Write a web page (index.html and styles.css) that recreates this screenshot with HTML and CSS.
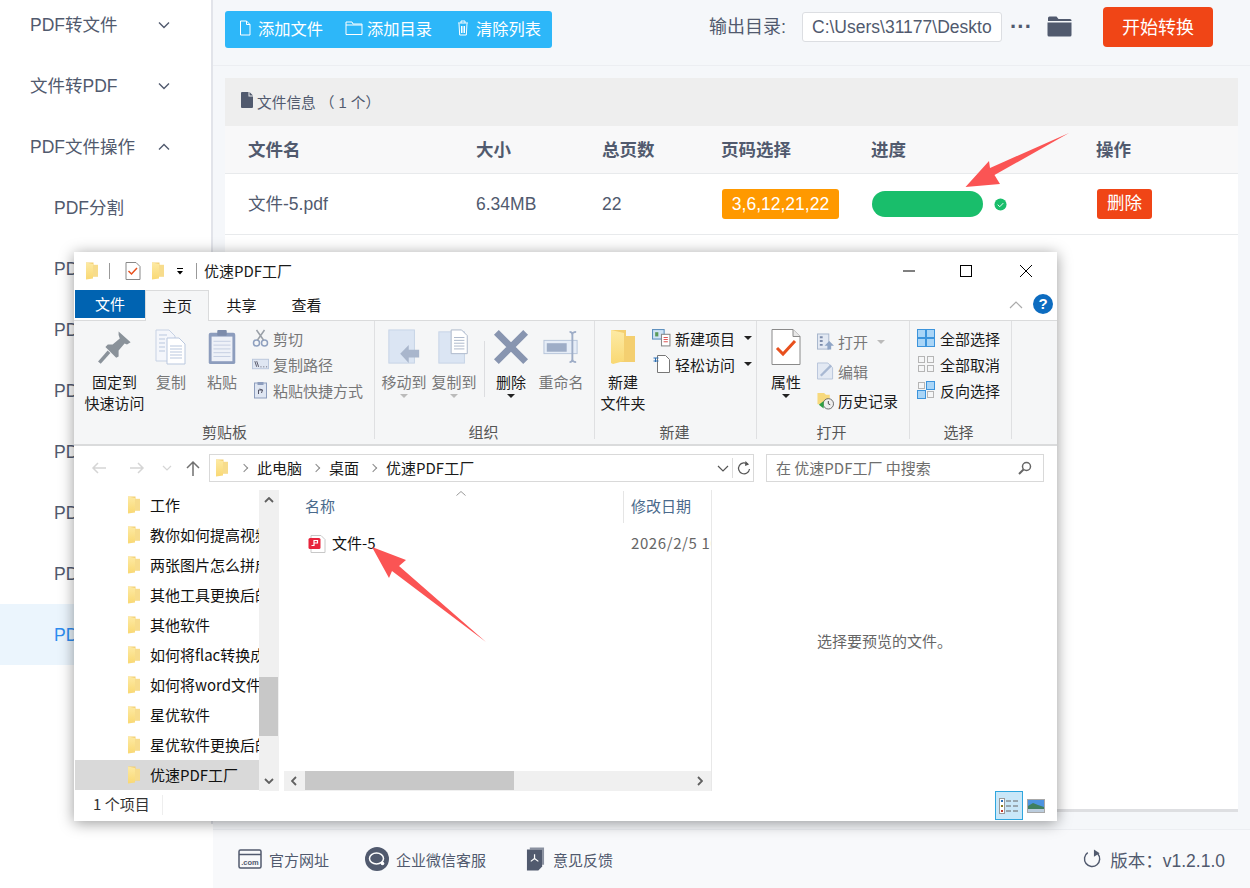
FILE: index.html
```html
<!DOCTYPE html>
<html lang="zh-CN">
<head>
<meta charset="utf-8">
<title>优速PDF工厂</title>
<link rel="stylesheet" href="styles.css">
</head>
<body>
<svg class="defs" width="0" height="0" aria-hidden="true">
  <defs>
    <linearGradient id="fy" x1="0" y1="0" x2="0" y2="1"><stop offset="0" stop-color="#fdeaa4"/><stop offset="1" stop-color="#f9d873"/></linearGradient>
    <symbol id="folder" viewBox="0 0 14 18">
      <path d="M1 0.500h7.500v2.500h4.500v11.500H5V16H1z" fill="#f3cf72"/>
      <path d="M1 0.500l7 1.500v14.500L1 17.500z" fill="url(#fy)"/>
      <path d="M8 2.800h5v11.700H8z" fill="#f7dc8c"/>
    </symbol>
    <symbol id="chev" viewBox="0 0 12 8"><path d="M1 1.500l5 5 5-5" fill="none" stroke="#515a6e" stroke-width="1.400"/></symbol>
  </defs>
</svg>

<div class="app">
  <aside class="sidebar">
    <nav class="nav">
      <div class="nav-item"><span>PDF转文件</span><svg class="nav-chev"><use href="#chev"/></svg></div>
      <div class="nav-item"><span>文件转PDF</span><svg class="nav-chev"><use href="#chev"/></svg></div>
      <div class="nav-item"><span>PDF文件操作</span><svg class="nav-chev up"><use href="#chev"/></svg></div>
      <div class="nav-sub">PDF分割</div>
      <div class="nav-sub">PDF合并</div>
      <div class="nav-sub">PDF压缩</div>
      <div class="nav-sub">PDF加密</div>
      <div class="nav-sub">PDF解密</div>
      <div class="nav-sub">PDF旋转</div>
      <div class="nav-sub">PDF水印</div>
      <div class="nav-sub active">PDF提取</div>
    </nav>
  </aside>

  <main class="main">
    <header class="topbar">
      <div class="toolgroup">
        <button class="tool"><svg class="ti" viewBox="0 0 12 16"><path d="M1.500 1h6l3.500 3.500V15h-9.500z M7.500 1v3.500H11" fill="none" stroke="#fff" stroke-width="1"/></svg>添加文件</button>
        <button class="tool"><svg class="ti wide" viewBox="0 0 18 16"><path d="M1 2h6l1 2h9v10.500H1z M1 5h16" fill="none" stroke="#fff" stroke-width="1"/></svg>添加目录</button>
        <button class="tool"><svg class="ti" viewBox="0 0 12 16"><path d="M1 3h10M4 3V1h4v2M2 3.500l.7 11.500h6.600l.7-11.500M4.500 6v7M6 6v7M7.500 6v7" fill="none" stroke="#fff" stroke-width="1"/></svg>清除列表</button>
      </div>
      <div class="output">
        <span class="out-label">输出目录:</span>
        <div class="out-input">C:\Users\31177\Deskto</div>
        <span class="dots">···</span>
        <svg class="out-folder" viewBox="0 0 25 22"><path d="M1 3a1.500 1.500 0 0 1 1.500-1.500h7l2 2.500H23a1.500 1.500 0 0 1 1.500 1.500V6H1z" fill="#515a6e"/><path d="M.5 7.500h24V20a1.500 1.500 0 0 1-1.500 1.500H2A1.500 1.500 0 0 1 .5 20z" fill="#515a6e"/></svg>
        <button class="start">开始转换</button>
      </div>
    </header>

    <section class="panel">
      <div class="info"><svg class="info-icon" viewBox="0 0 12 16"><path d="M0 1a1 1 0 0 1 1-1h6.500v4.500H12V15a1 1 0 0 1-1 1H1a1 1 0 0 1-1-1z M8.500 0L12 3.500H8.500z" fill="#515a6e"/></svg><span>文件信息 （ 1 个）</span></div>
      <div class="row head">
        <div>文件名</div><div>大小</div><div>总页数</div><div>页码选择</div><div>进度</div><div>操作</div>
      </div>
      <div class="row body">
        <div class="cell-name">文件-5.pdf</div><div>6.34MB</div><div>22</div>
        <div><span class="pages">3,6,12,21,22</span></div>
        <div class="prog"><span class="bar"></span><svg class="ok" viewBox="0 0 14 14"><circle cx="7" cy="7" r="6.500" fill="#19be6b"/><path d="M4 7.200l2.200 2.200L10 5.500" fill="none" stroke="#fff" stroke-width="1"/></svg></div>
        <div><span class="del">删除</span></div>
      </div>
    </section>

    <footer class="foot">
      <div class="foot-links">
        <span class="flink l1"><svg class="fi" viewBox="0 0 24 20"><rect x="1" y="1" width="22" height="18" rx="1.500" fill="none" stroke="#515a6e" stroke-width="1.500"/><path d="M1 5.500h22" stroke="#515a6e" stroke-width="1.500"/><text x="12" y="15.500" class="com">.com</text></svg>官方网址</span>
        <span class="flink l2"><svg class="fi" viewBox="0 0 24 24"><circle cx="12" cy="12" r="12" fill="#515a6e"/><ellipse cx="11.500" cy="11.500" rx="7" ry="5.500" fill="none" stroke="#fff" stroke-width="1.500"/><circle cx="17.500" cy="16.500" r="1.800" fill="#fff"/></svg>企业微信客服</span>
        <span class="flink l3"><svg class="fi doc" viewBox="0 0 20 24"><path d="M4 0h15v18l-2 0V2H4z" fill="#8a91a0"/><path d="M1 2h16v18l-4 4H1z" fill="#515a6e"/><path d="M9 7v4.500M9 11.500l-4 3M9 11.500l4 3" stroke="#fff" stroke-width="1.300" fill="none"/></svg>意见反馈</span>
      </div>
      <div class="version"><svg class="ref" viewBox="0 0 20 20"><path d="M15.500 4.500A8 8 0 1 1 5 3.300" fill="none" stroke="#515a6e" stroke-width="1.500"/><path d="M11.500 0l6 4-6 3.500z" fill="#515a6e"/></svg><span>版本：v1.2.1.0</span></div>
    </footer>
  </main>

  <div class="win">
    <div class="titlebar">
      <svg class="f14"><use href="#folder"/></svg>
      <i class="tsep"></i>
      <svg class="tcheck" viewBox="0 0 16 18"><path d="M1 .5h10l4 4v13H1z" fill="#fff" stroke="#888"/><path d="M3.500 9l3 3 5.500-6" fill="none" stroke="#e8501d" stroke-width="1.500"/></svg>
      <svg class="f14"><use href="#folder"/></svg>
      <svg class="tcaret" viewBox="0 0 8 7"><path d="M1 .5h6" stroke="#000"/><path d="M1 3h6L4 6.500z" fill="#000"/></svg>
      <i class="tsep s2"></i>
      <span class="wtitle">优速PDF工厂</span>
      <div class="winbtns">
        <svg viewBox="0 0 14 14"><path d="M1 7h12" stroke="#000"/></svg>
        <svg viewBox="0 0 14 14"><rect x="1.500" y="1.500" width="11" height="11" fill="none" stroke="#000"/></svg>
        <svg viewBox="0 0 14 14"><path d="M1 1l12 12M13 1L1 13" stroke="#000" fill="none"/></svg>
      </div>
    </div>

    <div class="tabs">
      <span class="tab file">文件</span>
      <span class="tab cur">主页</span>
      <span class="tab t3">共享</span>
      <span class="tab t4">查看</span>
      <svg class="collapse" viewBox="0 0 14 8"><path d="M1 7l6-6 6 6" fill="none" stroke="#aaa" stroke-width="1.200"/></svg>
      <span class="help">?</span>
    </div>

    <div class="ribbon">
      <div class="group g1">
        <div class="gbody">
          <div class="big w61"><svg class="bi" viewBox="0 0 30 30"><path d="M18 2l10 9-3 2-2-1-5 6 0 5-2 1-9-9 2-2 4 0 6-5-1-3z" fill="#8a929a"/><path d="M10 19L2 28" stroke="#8a929a" stroke-width="3"/></svg><span class="lb dark">固定到<br>快速访问</span></div>
          <div class="big w52"><svg class="bi" viewBox="0 0 32 36"><path d="M1 1h13l6 6v25H1z" fill="#f4f6fb" stroke="#c7d2e4"/><path d="M12 9h12l6 6v20H12z" fill="#fff" stroke="#b9c7de"/><path d="M4 6h8M4 10h6M4 14h6M4 18h6M4 22h6M15 17h12M15 20h12M15 23h12M15 26h12M15 29h12" stroke="#b9c7de"/></svg><span class="lb">复制</span></div>
          <div class="big w50"><svg class="bi" viewBox="0 0 30 38"><rect x="1" y="4" width="28" height="33" rx="2" fill="#8d9dbd"/><rect x="4" y="8" width="22" height="26" fill="#eef1f8"/><rect x="10" y="1" width="10" height="6" rx="1" fill="#7d8cab"/><path d="M6 13h18M6 17h18M6 21h18M6 25h18M6 29h18" stroke="#c4cde0"/></svg><span class="lb">粘贴</span></div>
          <div class="smalls s1">
            <div class="sm dis"><svg class="si" viewBox="0 0 16 18"><circle cx="4" cy="14" r="3" fill="none" stroke="#8fa0bf" stroke-width="1.500"/><circle cx="12" cy="14" r="3" fill="none" stroke="#8fa0bf" stroke-width="1.500"/><path d="M5 11L12 1M11 11L4 1" stroke="#9aa0a8" stroke-width="1.500"/></svg>剪切</div>
            <div class="sm dis"><svg class="si" viewBox="0 0 18 12"><rect x=".5" y="1" width="17" height="10" fill="#dfe6f2" stroke="#b9c6dc"/><path d="M3 3l2 6M5 3l2 6M9 9h1M12 9h1M15 9h1" stroke="#556"/></svg>复制路径</div>
            <div class="sm dis"><svg class="si" viewBox="0 0 14 18"><rect x="1" y="2" width="12" height="15" fill="#dfe6f2" stroke="#8d9dbd"/><rect x="4" y="1" width="6" height="3" fill="#8d9dbd"/><path d="M5 13V9h4M6 8l3 1-1 3" stroke="#556" fill="none"/></svg>粘贴快捷方式</div>
          </div>
        </div>
        <div class="glabel">剪贴板</div>
      </div>

      <div class="group g2">
        <div class="gbody">
          <div class="big w50"><svg class="bi" viewBox="0 0 34 38"><rect x="1" y="1" width="27" height="35" fill="#dbe5f3" stroke="#c6d3e6"/><path d="M13 26l9-9v5h11v8H22v6z" fill="#a9b6cc"/></svg><span class="lb">移动到</span><i class="caret gray"></i></div>
          <div class="big w50"><svg class="bi" viewBox="0 0 34 38"><rect x="1" y="3" width="27" height="33" fill="#dbe5f3" stroke="#c6d3e6"/><path d="M14 1h11l6 6v19H14z" fill="#fff" stroke="#aab6c9"/><path d="M17 9h11M17 12h11M17 15h11M17 18h11M17 21h11" stroke="#aab6c9"/></svg><span class="lb">复制到</span><i class="caret gray"></i></div>
          <i class="vsep"></i>
          <div class="big w50"><svg class="bi" viewBox="0 0 32 32"><path d="M3 3l26 26M29 3L3 29" stroke="#8895b0" stroke-width="6" fill="none"/></svg><span class="lb dark">删除</span><i class="caret"></i></div>
          <div class="big w50"><svg class="bi" viewBox="0 0 38 36"><rect x="1" y="11" width="35" height="14" fill="#e6edf7" stroke="#b6c4da"/><rect x="4" y="14" width="21" height="9" fill="#9eadc7"/><path d="M28 2c3 0 3 2 3 3v26c0 1 0 3-3 3M35 2c-3 0-4 2-4 3M35 34c-3 0-4-2-4-3" fill="none" stroke="#9eadc7" stroke-width="2"/></svg><span class="lb">重命名</span></div>
        </div>
        <div class="glabel">组织</div>
      </div>

      <div class="group g3">
        <div class="gbody">
          <div class="big w54"><svg class="bi" viewBox="0 0 26 36"><path d="M1 1h15v6h9v26H10v-1H1z" fill="#f4cf70"/><path d="M1 1l13 3v28L3 35 1 34z" fill="url(#fy)"/></svg><span class="lb dark">新建<br>文件夹</span></div>
          <div class="smalls s3">
            <div class="sm"><svg class="si wide" viewBox="0 0 18 17"><rect x=".5" y=".5" width="11" height="9" fill="#cfe3f5" stroke="#5c8fbe"/><rect x="9" y="5" width="8" height="11" fill="#fff" stroke="#888"/><path d="M11 8h4M11 10h4M11 12h4" stroke="#d55"/><rect x="3" y="3" width="3" height="4" fill="#5a9a5a"/></svg>新建项目<i class="caret in"></i></div>
            <div class="sm"><svg class="si wide" viewBox="0 0 18 18"><path d="M5 .5h8l4 4v13H5z" fill="#fff" stroke="#777"/><path d="M1 3h5M1 6h5" stroke="#2a6fb5"/><path d="M3 3v4" stroke="#2a6fb5"/></svg>轻松访问<i class="caret in"></i></div>
          </div>
        </div>
        <div class="glabel">新建</div>
      </div>

      <div class="group g4">
        <div class="gbody">
          <div class="big w50"><svg class="bi" viewBox="0 0 30 36"><path d="M1 .5h21l7 7v28H1z" fill="#fff" stroke="#8a8a8a"/><path d="M22 .5v7h7" fill="#e8e8e8" stroke="#8a8a8a"/><path d="M6 19l6 6 12-13" fill="none" stroke="#e8501d" stroke-width="3"/></svg><span class="lb dark">属性</span><i class="caret"></i></div>
          <div class="smalls s4">
            <div class="sm dis"><svg class="si" viewBox="0 0 18 18"><rect x=".5" y=".5" width="12" height="16" fill="#e3e9f3" stroke="#a6b4cc"/><path d="M3 4h3M3 8h3M3 12h3" stroke="#7d8cab" stroke-width="2"/><path d="M13 8l5 5h-3v4h-4v-4H8z" fill="#8fa5c6"/></svg>打开<i class="caret in gray"></i></div>
            <div class="sm dis"><svg class="si" viewBox="0 0 18 18"><path d="M.5.5h11l5 5v12H.5z" fill="#e3e9f3" stroke="#b6c4da"/><path d="M4 14L15 3" stroke="#a8b8d2" stroke-width="2.500"/></svg>编辑</div>
            <div class="sm"><svg class="si" viewBox="0 0 18 18"><path d="M.5.5h7l2 2h4v10H.5z" fill="#f7d97d"/><circle cx="12" cy="12" r="5.500" fill="#eee" stroke="#666"/><path d="M12 9v3l2 1" stroke="#444" fill="none"/><path d="M2 13l5-4v8z" fill="#2f9e44"/></svg>历史记录</div>
          </div>
        </div>
        <div class="glabel">打开</div>
      </div>

      <div class="group g5">
        <div class="gbody">
          <div class="smalls s5">
            <div class="sm"><svg class="si sel" viewBox="0 0 18 18"><g fill="#a9d5f7" stroke="#3c94dc"><rect x=".5" y=".5" width="8" height="8"/><rect x="9.500" y=".5" width="8" height="8"/><rect x=".5" y="9.500" width="8" height="8"/><rect x="9.500" y="9.500" width="8" height="8"/></g></svg>全部选择</div>
            <div class="sm"><svg class="si sel" viewBox="0 0 18 18"><g fill="none" stroke="#b5b5b5"><rect x="1.500" y="1.500" width="6" height="6"/><rect x="10.500" y="1.500" width="6" height="6"/><rect x="1.500" y="10.500" width="6" height="6"/><rect x="10.500" y="10.500" width="6" height="6"/></g></svg>全部取消</div>
            <div class="sm"><svg class="si sel" viewBox="0 0 18 18"><g fill="none" stroke="#b5b5b5"><rect x="1.500" y="1.500" width="6" height="6"/><rect x="10.500" y="10.500" width="6" height="6"/></g><g fill="#a9d5f7" stroke="#3c94dc"><rect x="9.500" y=".5" width="8" height="8"/><rect x=".5" y="9.500" width="8" height="8"/></g></svg>反向选择</div>
          </div>
        </div>
        <div class="glabel">选择</div>
      </div>
    </div>

    <div class="addr">
      <svg class="na" viewBox="0 0 16 14"><path d="M15 7H2M7 2L2 7l5 5" fill="none" stroke="#d5d5d5" stroke-width="1.500"/></svg>
      <svg class="na n2" viewBox="0 0 16 14"><path d="M1 7h13M9 2l5 5-5 5" fill="none" stroke="#d5d5d5" stroke-width="1.500"/></svg>
      <svg class="na n3" viewBox="0 0 10 6"><path d="M1 1l4 4 4-4" fill="none" stroke="#d5d5d5" stroke-width="1.200"/></svg>
      <svg class="na n4" viewBox="0 0 14 16"><path d="M7 16V2M1 8l6-6 6 6" fill="none" stroke="#707070" stroke-width="1.500"/></svg>
      <div class="path">
        <svg class="f14 pf"><use href="#folder"/></svg>
        <i class="gt first"></i><span>此电脑</span>
        <i class="gt"></i><span>桌面</span>
        <i class="gt"></i><span>优速PDF工厂</span>
        <svg class="pd" viewBox="0 0 12 7"><path d="M1 1l5 5 5-5" fill="none" stroke="#555" stroke-width="1.200"/></svg>
        <i class="pdsep"></i>
        <svg class="pr" viewBox="0 0 14 16"><path d="M11 4.500A5.500 5.500 0 1 0 12.500 9" fill="none" stroke="#555" stroke-width="1.200"/><path d="M8.500 1l3.500 3.500-4 1.500z" fill="#555"/></svg>
      </div>
      <div class="search"><span>在 优速PDF工厂 中搜索</span><svg class="mag" viewBox="0 0 14 14"><circle cx="8.500" cy="5.500" r="4" fill="none" stroke="#666" stroke-width="1.500"/><path d="M5.500 8.500L1 13" stroke="#666" stroke-width="2"/></svg></div>
    </div>

    <div class="panes">
      <div class="tree">
        <div class="tree-list">
          <div class="tr"><svg class="f14"><use href="#folder"/></svg><span>工作</span></div>
          <div class="tr"><svg class="f14"><use href="#folder"/></svg><span>教你如何提高视频</span></div>
          <div class="tr"><svg class="f14"><use href="#folder"/></svg><span>两张图片怎么拼成一张</span></div>
          <div class="tr"><svg class="f14"><use href="#folder"/></svg><span>其他工具更换后的</span></div>
          <div class="tr"><svg class="f14"><use href="#folder"/></svg><span>其他软件</span></div>
          <div class="tr"><svg class="f14"><use href="#folder"/></svg><span>如何将flac转换成</span></div>
          <div class="tr"><svg class="f14"><use href="#folder"/></svg><span>如何将word文件转</span></div>
          <div class="tr"><svg class="f14"><use href="#folder"/></svg><span>星优软件</span></div>
          <div class="tr"><svg class="f14"><use href="#folder"/></svg><span>星优软件更换后的</span></div>
          <div class="tr sel"><svg class="f14"><use href="#folder"/></svg><span>优速PDF工厂</span></div>
        </div>
        <div class="vscroll">
          <svg class="sa" viewBox="0 0 10 6"><path d="M1 5l4-4 4 4" fill="none" stroke="#606060" stroke-width="1.800"/></svg>
          <div class="vtrack"><i class="vthumb"></i></div>
          <svg class="sa" viewBox="0 0 10 6"><path d="M1 1l4 4 4-4" fill="none" stroke="#606060" stroke-width="1.800"/></svg>
        </div>
      </div>

      <div class="files">
        <div class="fhead">
          <svg class="sort" viewBox="0 0 10 5"><path d="M.5 4.500L5 .5l4.500 4" fill="none" stroke="#999"/></svg>
          <span class="colname">名称</span><i class="colsep"></i><span class="coldate">修改日期</span>
        </div>
        <div class="frow">
          <svg class="pdf" viewBox="0 0 18 18"><path d="M3 .5h10l4 4v13H3z" fill="#fff" stroke="#c8c8c8"/><rect x=".5" y="3" width="12" height="11" rx="1.500" fill="#e8243c"/><path d="M3.500 10.500H6V8h1.500 M6 8V5.500h3.500V8H6" fill="none" stroke="#fff" stroke-width="1.200"/></svg>
          <span class="fname">文件-5</span><span class="fdate">2026/2/5 10:20</span>
        </div>
        <div class="hscroll">
          <svg class="sa h" viewBox="0 0 6 10"><path d="M5 1L1 5l4 4" fill="none" stroke="#606060" stroke-width="1.800"/></svg>
          <div class="htrack"><i class="hthumb"></i></div>
          <svg class="sa h" viewBox="0 0 6 10"><path d="M1 1l4 4-4 4" fill="none" stroke="#606060" stroke-width="1.800"/></svg>
        </div>
      </div>

      <div class="preview">选择要预览的文件。</div>
    </div>

    <div class="status">
      <span class="count">1 个项目</span><i class="ssep"></i>
      <div class="views">
        <span class="vbtn on"><svg viewBox="0 0 20 16"><rect x=".5" y=".5" width="5" height="15" fill="#fff" stroke="#999"/><path d="M2 3h2" stroke="#2a6fb5" stroke-width="2"/><path d="M2 8h2" stroke="#8a7a20" stroke-width="2"/><path d="M2 13h2" stroke="#c0392b" stroke-width="2"/><path d="M7 3h5M14 3h5M7 8h5M14 8h5M7 13h5M14 13h5" stroke="#666"/></svg></span>
        <span class="vbtn pic"><svg viewBox="0 0 18 14"><rect x=".5" y=".5" width="17" height="13" fill="#4d93e0" stroke="#a8a8a8"/><path d="M1 7l5-3 5 2 6 2v5H1z" fill="#3f7f5f"/><path d="M1 10h16v3H1z" fill="#bcd"/></svg></span>
      </div>
    </div>
  </div>

  <svg class="arrows" viewBox="0 0 1250 888" aria-hidden="true">
    <path d="M1069 133L990 168 989 161 965.500 187 1000 184 994.500 175z" fill="#fb5454"/>
    <path d="M372 547L406 560 399 566 486 642 392 571 389 578z" fill="#fb5454"/>
  </svg>
</div>
</body>
</html>
```

FILE: styles.css
```css
* { box-sizing: border-box; }
html, body { margin: 0; padding: 0; }
body { width: 1250px; height: 888px; overflow: hidden; background: #fff; font-family: "Liberation Sans", "Noto Sans CJK SC", sans-serif; color: #515a6e; }
.defs { position: absolute; }
i { display: block; font-style: normal; }
button { font: inherit; border: 0; padding: 0; background: none; }

.app { display: flex; height: 888px; position: relative; }

/* sidebar */
.sidebar { width: 213px; flex: none; background: #fff; font-size: 17.500px; }
.nav { height: 830px; border-right: 2px solid #e2e4ea; }
.nav-item { height: 61px; padding: 0 41px 0 30px; display: flex; align-items: center; justify-content: space-between; }
.nav-item span { padding-bottom: 2px; }
.nav-item:first-child { margin-top: -6px; }
.nav-chev { width: 12px; height: 8px; flex: none; }
.nav-chev.up { transform: rotate(180deg); }
.nav-sub { height: 61px; padding: 0 0 2px 54px; display: flex; align-items: center; }
.nav-sub.active { background: #ebf5fd; color: #2d8cf0; }

/* main */
.main { flex: 1; min-width: 0; display: flex; flex-direction: column; background: #f5f7fa; }
.topbar { height: 66px; flex: none; border-bottom: 1px solid #eceef2; display: flex; align-items: flex-start; justify-content: space-between; padding: 0 37px 0 12px; }
.toolgroup { margin-top: 11px; height: 37px; width: 327px; background: #2db7f9; border-radius: 3px; display: flex; align-items: center; padding: 0 0 3px 14px; gap: 22px; }
.tool { color: #fff; font-size: 16.250px; display: flex; align-items: center; gap: 7px; white-space: nowrap; }
.tool:last-child { margin-left: 3px; }
.ti { width: 12px; height: 16px; flex: none; }
.ti.wide { width: 18px; height: 16px; margin-right: -3px; }
.output { display: flex; align-items: center; margin-top: 7px; height: 40px; }
.out-label { font-size: 18px; width: 93px; padding-bottom: 5px; white-space: nowrap; }
.out-input { width: 200px; height: 30px; background: #fff; border: 1px solid #dcdee2; border-radius: 3px; font-size: 17.500px; line-height: 28px; padding-left: 9px; overflow: hidden; white-space: nowrap; }
.dots { font-size: 22px; font-weight: 700; width: 46px; padding-left: 8px; letter-spacing: 0; line-height: 1; }
.out-folder { width: 25px; height: 22px; margin: -2px 0 0 -1px; flex: none; }
.start { width: 110px; height: 40px; margin-left: 31px; background: #f04516; color: #fff; border-radius: 4px; font-size: 18px; padding-bottom: 3px; }

.panel { flex: 1; margin: 12px 12px 0; background: #fff; border-bottom: 3px solid #dedfe2; display: flex; flex-direction: column; }
.info { height: 48px; flex: none; background: #eee; font-size: 14.700px; display: flex; align-items: center; padding: 0 0 2px 16px; gap: 4px; }
.info-icon { width: 12px; height: 16px; margin-top: -3px; }
.row { display: grid; grid-template-columns: 228px 126px 119px 150px 225px 1fr; padding-left: 23px; align-items: center; font-size: 17.500px; }
.row.head { height: 48px; background: #f8f8f9; border-bottom: 1px solid #e8eaec; font-weight: 700; padding-bottom: 3px; }
.row.body { height: 61px; border-bottom: 1px solid #e8eaec; }
.cell-name { padding-bottom: 3px; }
.pages { display: inline-block; width: 117px; height: 30px; line-height: 30px; margin-left: 1px; text-align: center; color: #fff; background: #ff9900; border-radius: 3px; }
.prog { display: flex; align-items: center; gap: 11px; margin-left: 1px; }
.bar { width: 111px; height: 26px; background: #19be6b; border-radius: 13px; }
.ok { width: 13px; height: 13px; }
.del { display: inline-block; width: 55px; height: 30px; line-height: 29px; margin-left: 1px; text-align: center; color: #fff; background: #f04516; border-radius: 3px; }

.foot { height: 59px; flex: none; margin-top: 17px; background: #f8f9fb; border-top: 1px solid #eceef2; display: flex; align-items: center; justify-content: space-between; padding: 0 25px 0 25px; font-size: 15px; }
.foot-links { display: flex; align-items: center; }
.flink { display: flex; align-items: center; white-space: nowrap; }
.l1 { gap: 7px; width: 127px; }
.l2 { gap: 7px; width: 161px; }
.l3 { gap: 8px; }
.fi { width: 24px; height: 24px; flex: none; }
.fi.doc { width: 19px; }
.com { font: 700 7.500px "Liberation Sans", sans-serif; fill: #515a6e; text-anchor: middle; }
.version { display: flex; align-items: center; gap: 8px; font-size: 17.500px; }
.ref { width: 19px; height: 20px; }

/* window */
.win { position: absolute; left: 74px; top: 252px; width: 983px; height: 569px; background: #fff; box-shadow: 0 2px 14px rgba(0,0,0,.4); display: flex; flex-direction: column; font-family: "Noto Sans CJK SC", "Liberation Sans", sans-serif; font-size: 15px; color: #1a1a1a; }
.f14 { width: 14px; height: 18px; flex: none; display: block; }
.titlebar { height: 38px; flex: none; display: flex; align-items: center; padding-left: 11px; }
.tsep { width: 1px; height: 16px; background: #999; margin: 0 15px 0 10px; }
.tsep.s2 { margin: 0 7px 0 12px; }
.tcheck { width: 16px; height: 18px; margin-right: 10px; }
.tcaret { width: 8px; height: 7px; margin-left: 11px; }
.wtitle { padding-bottom: 1px; }
.winbtns { margin-left: auto; display: flex; gap: 46px; padding-right: 24px; }
.winbtns svg { width: 14px; height: 14px; display: block; }
.winbtns svg:first-child { margin-right: -3px; }
.tabs { height: 31px; flex: none; position: relative; display: flex; align-items: stretch; padding-left: 1px; border-bottom: 1px solid #dadbdc; }
.tab { display: flex; align-items: center; justify-content: center; padding-bottom: 2px; }
.tab.file { width: 70px; height: 28px; background: #0063b1; color: #fff; }
.tab.cur { width: 64px; height: 31px; background: #f5f6f7; border: 1px solid #dadbdc; border-bottom: 0; position: relative; }
.tab.t3 { width: 65px; }
.tab.t4 { width: 65px; }
.collapse { position: absolute; left: 935px; top: 11px; width: 14px; height: 8px; }
.help { position: absolute; left: 959px; top: 4px; width: 20px; height: 20px; border-radius: 50%; background: #0d6cc0; color: #fff; font: 700 15px/20px "Liberation Sans", sans-serif; text-align: center; padding: 0; }

.ribbon { height: 125px; flex: none; background: #f5f6f7; border-bottom: 2px solid #dadbdc; display: flex; padding-left: 1px; }
.group { flex: none; display: flex; flex-direction: column; border-right: 1px solid #dfe0e2; height: 118px; }
.g1 { width: 300px; padding-left: 9px; }
.g2 { width: 220px; padding-left: 4px; }
.g3 { width: 162px; padding-left: 1px; }
.g4 { width: 153px; padding-left: 4px; }
.g5 { width: 102px; padding-left: 7px; }
.gbody { height: 101px; display: flex; flex: none; }
.glabel { text-align: center; height: 20px; line-height: 20px; color: #555; }
.g1 .glabel { margin-left: -9px; }
.g2 .glabel { margin-left: -4px; padding-right: 2px; }
.g3 .glabel { padding-right: 3px; }
.g4 .glabel { margin-left: -4px; padding-right: 3px; }
.g5 .glabel { margin-left: -7px; padding-right: 4px; }
.big { flex: none; display: flex; flex-direction: column; align-items: center; padding-top: 8px; position: relative; color: #777; text-align: center; }
.w61 { width: 61px; } .w52 { width: 52px; } .w50 { width: 50px; } .w54 { width: 54px; }
.bi { width: 36px; height: 36px; flex: none; margin-bottom: 6px; }
.lb { line-height: 21px; white-space: nowrap; }
.lb.dark { color: #1a1a1a; }
.caret { width: 0; height: 0; border: 4px solid transparent; border-top-color: #222; border-bottom: 0; margin-top: 2px; }
.caret.gray { border-top-color: #bbb; }
.caret.in { margin: 0 0 0 5px; }
.vsep { width: 1px; height: 56px; background: #dcdde0; margin: 20px 1px 0 5px; flex: none; }
.smalls { display: flex; flex-direction: column; padding-top: 4px; }
.s1 { margin-left: 5px; }
.s3 { margin-left: 2px; }
.s4 { margin-left: 6px; }
.sm { height: 26px; display: flex; align-items: center; gap: 4px; white-space: nowrap; color: #1a1a1a; }
.sm.dis { color: #777; }
.si { width: 17px; height: 18px; flex: none; }
.si.wide { width: 19px; }
.si.sel { width: 18px; height: 18px; margin-right: 1px; }
.s4 { padding-top: 6px; }
.s4 .sm { height: 29.500px; }

.addr { height: 44px; flex: none; display: flex; align-items: center; position: relative; padding-left: 135px; }
.na { position: absolute; left: 17px; top: 15px; width: 16px; height: 14px; }
.na.n2 { left: 55px; }
.na.n3 { left: 88px; top: 19px; width: 10px; height: 6px; }
.na.n4 { left: 112px; top: 14px; width: 14px; height: 16px; }
.path { width: 545px; height: 28px; border: 1px solid #d9d9d9; display: flex; align-items: center; padding-left: 5px; flex: none; }
.path span { padding-bottom: 1px; }
.pf { margin-right: 0; }
.gt { width: 6px; height: 6px; border: solid #8a8a8a; border-width: 1.500px 1.500px 0 0; transform: rotate(45deg); margin: 0 10px 0 11px; flex: none; }
.gt.first { margin-left: 12px; }
.pd { width: 12px; height: 7px; margin-left: auto; }
.pdsep { width: 1px; height: 20px; background: #ddd; margin: 0 4px 0 3px; }
.pr { width: 14px; height: 16px; margin-right: 2px; }
.search { width: 278px; height: 28px; margin-left: 12px; border: 1px solid #d9d9d9; display: flex; align-items: center; justify-content: space-between; padding: 0 11px 1px 9px; color: #6e6e6e; flex: none; }
.mag { width: 14px; height: 14px; }

.panes { height: 301px; flex: none; display: flex; }
.tree { width: 205px; flex: none; display: flex; padding-left: 1px; }
.tree-list { width: 184px; flex: none; overflow: hidden; }
.tr { height: 30px; display: flex; align-items: center; padding-left: 52px; gap: 9px; white-space: nowrap; }
.tr span { color: #111; padding-bottom: 2px; }
.tr.sel { background: #d9d9d9; }
.vscroll { width: 20px; flex: none; background: #f0f0f0; display: flex; flex-direction: column; align-items: center; }
.sa { width: 10px; height: 6px; flex: none; margin: 7px 0; }
.vtrack { flex: 1; width: 100%; position: relative; }
.vthumb { position: absolute; left: 0; right: 1px; top: 167px; height: 59px; background: #c8c8c8; }
.files { width: 427px; margin-left: 5px; flex: none; display: flex; flex-direction: column; position: relative; overflow: hidden; }
.fhead { height: 34px; flex: none; position: relative; display: flex; align-items: center; padding-left: 21px; color: #4a6a8c; }
.sort { position: absolute; left: 172px; top: 1px; width: 10px; height: 5px; }
.colname { width: 318px; padding-bottom: 3px; }
.colsep { width: 1px; height: 32px; background: #e5e5e5; flex: none; }
.coldate { margin-left: 7px; white-space: nowrap; padding-bottom: 3px; }
.frow { height: 40px; flex: none; display: flex; align-items: center; padding-left: 24px; white-space: nowrap; }
.pdf { width: 18px; height: 18px; flex: none; }
.fname { margin-left: 6px; width: 299px; flex: none; color: #111; padding-bottom: 3px; }
.fdate { color: #666; padding-bottom: 3px; letter-spacing: .6px; }
.hscroll { margin-top: auto; height: 20px; flex: none; background: #f0f0f0; display: flex; align-items: center; }
.sa.h { width: 6px; height: 10px; margin: 0 8px 0 7px; }
.htrack { flex: 1; height: 100%; position: relative; }
.hthumb { position: absolute; left: 0; top: 0; bottom: 1px; width: 209px; background: #c8c8c8; }
.preview { flex: 1; border-left: 1px solid #e8e8e8; display: flex; align-items: center; justify-content: center; color: #666; }

.status { height: 30px; flex: none; display: flex; align-items: flex-start; padding-left: 19px; color: #333; position: relative; }
.ssep { width: 1px; height: 20px; background: #eee; margin: 4px 0 0 14px; }
.count { width: 55px; white-space: nowrap; padding-top: 3px; line-height: 20px; }
.views { margin-left: auto; display: flex; align-items: center; padding-right: 12px; gap: 4px; }
.vbtn { display: flex; align-items: center; justify-content: center; }
.vbtn.on { width: 28px; height: 29px; background: #c9e7f8; border: 1px solid #2fa6de; }
.vbtn.on svg { width: 20px; height: 16px; }
.vbtn.pic svg { width: 18px; height: 14px; display: block; }

.arrows { position: absolute; left: 0; top: 0; width: 1250px; height: 888px; pointer-events: none; }
```
